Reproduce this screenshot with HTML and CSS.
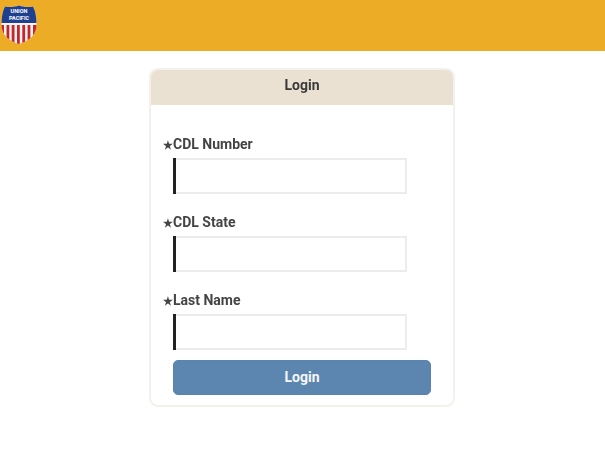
FILE: index.html
```html
<!DOCTYPE html>
<html lang="en">
<head>
  <meta charset="UTF-8">
  <title>Login</title>
  <link rel="stylesheet" href="styles.css">
</head>
<body>
  <header class="top-bar">
    <svg class="logo" viewBox="0 0 36 40" width="36" height="40" aria-label="Union Pacific">
      <defs>
        <clipPath id="shield-clip">
          <path d="M18 0.5 C14 2 8 2.5 4 1.5 C1.5 6 0.5 12 0.5 20 C0.5 30 8 36 18 39 C28 36 35.5 30 35.5 20 C35.5 12 34.5 6 32 1.5 C28 2.5 22 2 18 0.5 Z"/>
        </clipPath>
      </defs>
      <g clip-path="url(#shield-clip)">
        <rect width="36" height="40" fill="#f6f3f0"/>
        <rect y="0" width="36" height="18" fill="#1f3f8f"/>
        <g fill="#c4262e">
          <rect x="0" y="20" width="3" height="20"/>
          <rect x="5.5" y="20" width="2.8" height="20"/>
          <rect x="10.7" y="20" width="2.8" height="20"/>
          <rect x="16" y="20" width="2.8" height="20"/>
          <rect x="21.3" y="20" width="2.8" height="20"/>
          <rect x="26.6" y="20" width="2.8" height="20"/>
          <rect x="32" y="20" width="4" height="20"/>
        </g>
      </g>
      <text class="logo-text" x="18" y="8">UNION</text>
      <text class="logo-text" x="18" y="15">PACIFIC</text>
    </svg>
  </header>

  <main class="page">
    <section class="card">
      <h1 class="card-title">Login</h1>
      <form class="card-body">
        <div class="field">
          <label class="field-label"><span class="req">&#9733;</span>CDL Number</label>
          <input class="field-input" type="text">
        </div>
        <div class="field">
          <label class="field-label"><span class="req">&#9733;</span>CDL State</label>
          <input class="field-input" type="text">
        </div>
        <div class="field">
          <label class="field-label"><span class="req">&#9733;</span>Last Name</label>
          <input class="field-input" type="text">
        </div>
        <button class="login-btn" type="button">Login</button>
      </form>
    </section>
  </main>
</body>
</html>
```

FILE: styles.css
```css
body {
  margin: 0;
  background: #fff;
  color: #444;
  font-family: Roboto, "Liberation Sans", sans-serif;
  filter: blur(0.5px);
  min-height: 475px;
}

.top-bar {
  height: 51px;
  background: #ecac26;
  padding: 5px 0 0 1px;
  box-sizing: border-box;
}

.logo {
  display: block;
}

.logo-text {
  fill: #fff;
  font-family: Roboto, sans-serif;
  font-size: 5.5px;
  font-weight: 700;
  text-anchor: middle;
}

.page {
  display: flex;
  justify-content: center;
  padding: 17px 1px 0 0;
}

.card {
  width: 306px;
  height: 339px;
  box-sizing: border-box;
  border: 2px solid #f4f1ec;
  border-radius: 9px;
  overflow: hidden;
}

.card-title {
  margin: -2px -2px 0;
  height: 37px;
  line-height: 35px;
  background: #ebe1d3;
  font-size: 14px;
  font-weight: 700;
  text-align: center;
  color: #3a3a3a;
}

.card-body {
  display: flex;
  flex-direction: column;
  padding: 31px 22px 0 12px;
}

.field {
  display: flex;
  flex-direction: column;
  margin-bottom: 20px;
}

.field:nth-child(3) {
  margin-bottom: 10px;
}

.field-label {
  height: 16px;
  line-height: 16px;
  margin-bottom: 6px;
  font-size: 14px;
  font-weight: 700;
  white-space: nowrap;
}

.req {
  display: inline-block;
  width: 10px;
  font-size: 11px;
}

.field-input {
  width: 231px;
  height: 36px;
  margin-left: 13px;
  box-sizing: border-box;
  border: 2px solid #ececec;
  border-left: none;
  box-shadow: -3px 0 0 #222;
  background: #fff;
  padding: 0 6px;
  outline: none;
}

.login-btn {
  width: 258px;
  height: 35px;
  margin-left: 10px;
  padding: 0 0 2px;
  border: 1px solid #5a84ad;
  border-radius: 5px;
  background: #5c86b0;
  color: #f4f6f8;
  font-family: inherit;
  font-size: 14px;
  font-weight: 700;
}
```
